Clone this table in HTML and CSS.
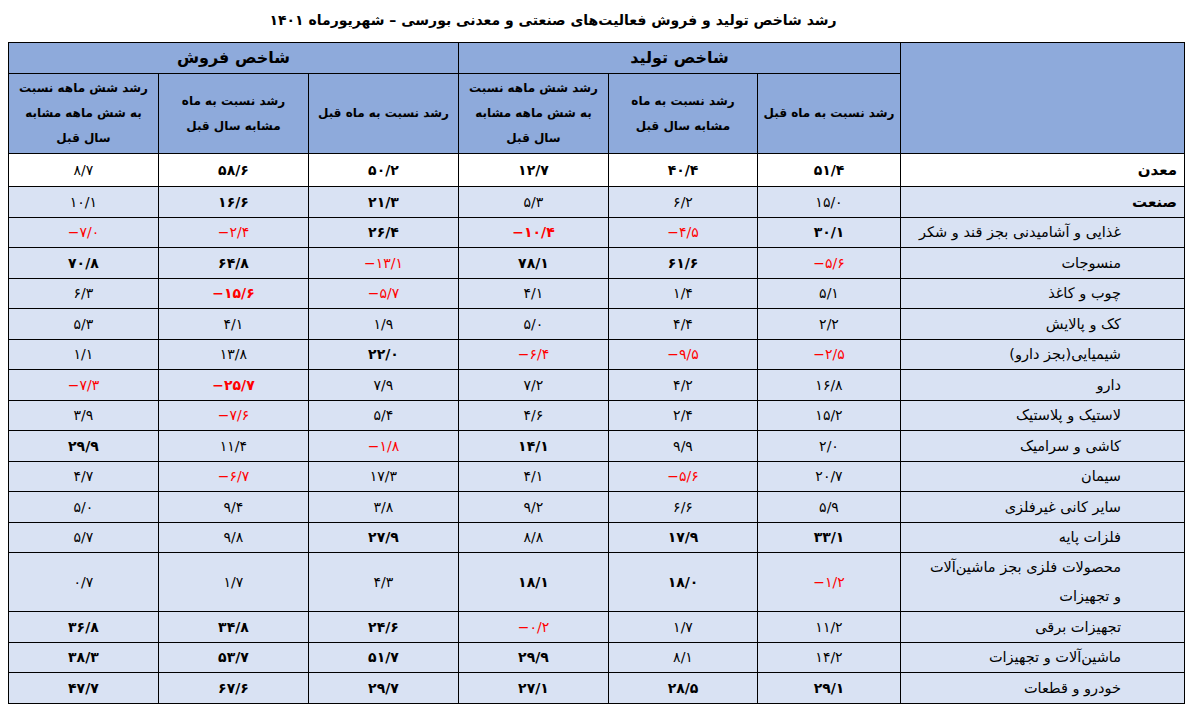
FILE: index.html
```html
<!DOCTYPE html>
<html lang="fa" dir="rtl">
<head>
<meta charset="utf-8">
<title>رشد شاخص تولید و فروش</title>
<link rel="stylesheet" href="styles.css">
</head>
<body>
<div class="page">
  <h1 class="title">رشد شاخص تولید و فروش فعالیت‌های صنعتی و معدنی بورسی – شهریورماه ۱۴۰۱</h1>
  <table class="grid">
    <colgroup>
      <col class="c-label"><col class="c-m6"><col class="c-m5"><col class="c-m4"><col class="c-m3"><col class="c-m2"><col class="c-m1">
    </colgroup>
    <thead>
      <tr class="h1">
        <th rowspan="2" class="corner"></th>
        <th colspan="3" class="group">شاخص تولید</th>
        <th colspan="3" class="group">شاخص فروش</th>
      </tr>
      <tr class="h2">
        <th>رشد نسبت به ماه قبل</th>
        <th>رشد نسبت به ماه<br>مشابه سال قبل</th>
        <th>رشد شش ماهه نسبت<br>به شش ماهه مشابه<br>سال قبل</th>
        <th>رشد نسبت به ماه قبل</th>
        <th>رشد نسبت به ماه<br>مشابه سال قبل</th>
        <th>رشد شش ماهه نسبت<br>به شش ماهه مشابه<br>سال قبل</th>
      </tr>
    </thead>
    <tbody>
      <tr class="row white">
        <td class="lab main">معدن</td>
        <td class="n b">۵۱/۴</td><td class="n b">۴۰/۴</td><td class="n b">۱۲/۷</td>
        <td class="n b">۵۰/۲</td><td class="n b">۵۸/۶</td><td class="n">۸/۷</td>
      </tr>
      <tr class="row">
        <td class="lab main">صنعت</td>
        <td class="n">۱۵/۰</td><td class="n">۶/۲</td><td class="n">۵/۳</td>
        <td class="n b">۲۱/۳</td><td class="n b">۱۶/۶</td><td class="n">۱۰/۱</td>
      </tr>
      <tr class="row">
        <td class="lab">غذایی و آشامیدنی بجز قند و شکر</td>
        <td class="n b">۳۰/۱</td><td class="n neg">−۴/۵</td><td class="n neg b">−۱۰/۴</td>
        <td class="n b">۲۶/۴</td><td class="n neg">−۲/۴</td><td class="n neg">−۷/۰</td>
      </tr>
      <tr class="row">
        <td class="lab">منسوجات</td>
        <td class="n neg">−۵/۶</td><td class="n b">۶۱/۶</td><td class="n b">۷۸/۱</td>
        <td class="n neg">−۱۳/۱</td><td class="n b">۶۴/۸</td><td class="n b">۷۰/۸</td>
      </tr>
      <tr class="row">
        <td class="lab">چوب و کاغذ</td>
        <td class="n">۵/۱</td><td class="n">۱/۴</td><td class="n">۴/۱</td>
        <td class="n neg">−۵/۷</td><td class="n neg b">−۱۵/۶</td><td class="n">۶/۳</td>
      </tr>
      <tr class="row">
        <td class="lab">کک و پالایش</td>
        <td class="n">۲/۲</td><td class="n">۴/۴</td><td class="n">۵/۰</td>
        <td class="n">۱/۹</td><td class="n">۴/۱</td><td class="n">۵/۳</td>
      </tr>
      <tr class="row">
        <td class="lab">شیمیایی(بجز دارو)</td>
        <td class="n neg">−۲/۵</td><td class="n neg">−۹/۵</td><td class="n neg">−۶/۴</td>
        <td class="n b">۲۲/۰</td><td class="n">۱۳/۸</td><td class="n">۱/۱</td>
      </tr>
      <tr class="row">
        <td class="lab">دارو</td>
        <td class="n">۱۶/۸</td><td class="n">۴/۲</td><td class="n">۷/۲</td>
        <td class="n">۷/۹</td><td class="n neg b">−۲۵/۷</td><td class="n neg">−۷/۳</td>
      </tr>
      <tr class="row">
        <td class="lab">لاستیک و پلاستیک</td>
        <td class="n">۱۵/۲</td><td class="n">۲/۴</td><td class="n">۴/۶</td>
        <td class="n">۵/۴</td><td class="n neg">−۷/۶</td><td class="n">۳/۹</td>
      </tr>
      <tr class="row">
        <td class="lab">کاشی و سرامیک</td>
        <td class="n">۲/۰</td><td class="n">۹/۹</td><td class="n b">۱۴/۱</td>
        <td class="n neg">−۱/۸</td><td class="n">۱۱/۴</td><td class="n b">۲۹/۹</td>
      </tr>
      <tr class="row">
        <td class="lab">سیمان</td>
        <td class="n">۲۰/۷</td><td class="n neg">−۵/۶</td><td class="n">۴/۱</td>
        <td class="n">۱۷/۳</td><td class="n neg">−۶/۷</td><td class="n">۴/۷</td>
      </tr>
      <tr class="row">
        <td class="lab">سایر کانی غیرفلزی</td>
        <td class="n">۵/۹</td><td class="n">۶/۶</td><td class="n">۹/۲</td>
        <td class="n">۳/۸</td><td class="n">۹/۴</td><td class="n">۵/۰</td>
      </tr>
      <tr class="row">
        <td class="lab">فلزات پایه</td>
        <td class="n b">۳۳/۱</td><td class="n b">۱۷/۹</td><td class="n">۸/۸</td>
        <td class="n b">۲۷/۹</td><td class="n">۹/۸</td><td class="n">۵/۷</td>
      </tr>
      <tr class="row tall">
        <td class="lab">محصولات فلزی بجز ماشین‌آلات<br>و تجهیزات</td>
        <td class="n neg">−۱/۲</td><td class="n b">۱۸/۰</td><td class="n b">۱۸/۱</td>
        <td class="n">۴/۳</td><td class="n">۱/۷</td><td class="n">۰/۷</td>
      </tr>
      <tr class="row">
        <td class="lab">تجهیزات برقی</td>
        <td class="n">۱۱/۲</td><td class="n">۱/۷</td><td class="n neg">−۰/۲</td>
        <td class="n b">۲۴/۶</td><td class="n b">۳۴/۸</td><td class="n b">۳۶/۸</td>
      </tr>
      <tr class="row">
        <td class="lab">ماشین‌آلات و تجهیزات</td>
        <td class="n">۱۴/۲</td><td class="n">۸/۱</td><td class="n b">۲۹/۹</td>
        <td class="n b">۵۱/۷</td><td class="n b">۵۳/۷</td><td class="n b">۳۸/۳</td>
      </tr>
      <tr class="row">
        <td class="lab">خودرو و قطعات</td>
        <td class="n b">۲۹/۱</td><td class="n b">۲۸/۵</td><td class="n b">۲۷/۱</td>
        <td class="n b">۲۹/۷</td><td class="n b">۶۷/۶</td><td class="n b">۴۷/۷</td>
      </tr>
    </tbody>
  </table>
</div>
</body>
</html>
```

FILE: styles.css
```css
html, body {
  margin: 0;
  padding: 0;
  background: #ffffff;
}

body {
  font-family: "DejaVu Sans", sans-serif;
  color: #000000;
}

.page {
  width: 1188px;
  padding: 0;
}

.title {
  margin: 0;
  height: 42px;
  line-height: 40px;
  font-size: 14px;
  font-weight: 700;
  text-align: center;
  padding-right: 82px;
}

.grid {
  border-collapse: collapse;
  table-layout: fixed;
  width: 1176px;
  margin-right: 3px;
}

.c-label { width: 284px; }
.c-m6 { width: 143px; }
.c-m5 { width: 149px; }
.c-m4 { width: 150px; }
.c-m3 { width: 150px; }
.c-m2 { width: 150px; }
.c-m1 { width: 150px; }

.grid th,
.grid td {
  border: 1px solid #000000;
  padding: 0;
  vertical-align: middle;
}

.grid thead th {
  background: #8eaadb;
  font-weight: 700;
  text-align: center;
}

.h1 th {
  height: 30px;
  line-height: 20px;
}

.group {
  font-size: 16px;
}

.h2 th {
  height: 79px;
  font-size: 12px;
  line-height: 25px;
}

.row td {
  background: #d9e2f3;
  height: 29.5px;
  line-height: 20px;
}

.row.white td {
  background: #ffffff;
  height: 32px;
}

.row.tall td {
  height: 58px;
}

.row.tall .lab {
  line-height: 29px;
}

.lab {
  text-align: right;
  font-size: 14.5px;
  padding-right: 63px !important;
}

.lab.main {
  font-weight: 700;
  font-size: 15px;
  padding-right: 7px !important;
}

.n {
  direction: ltr;
  text-align: center;
  font-size: 14px;
}

.n.b {
  font-weight: 700;
}

.n.neg {
  color: #ff0000;
}
```
